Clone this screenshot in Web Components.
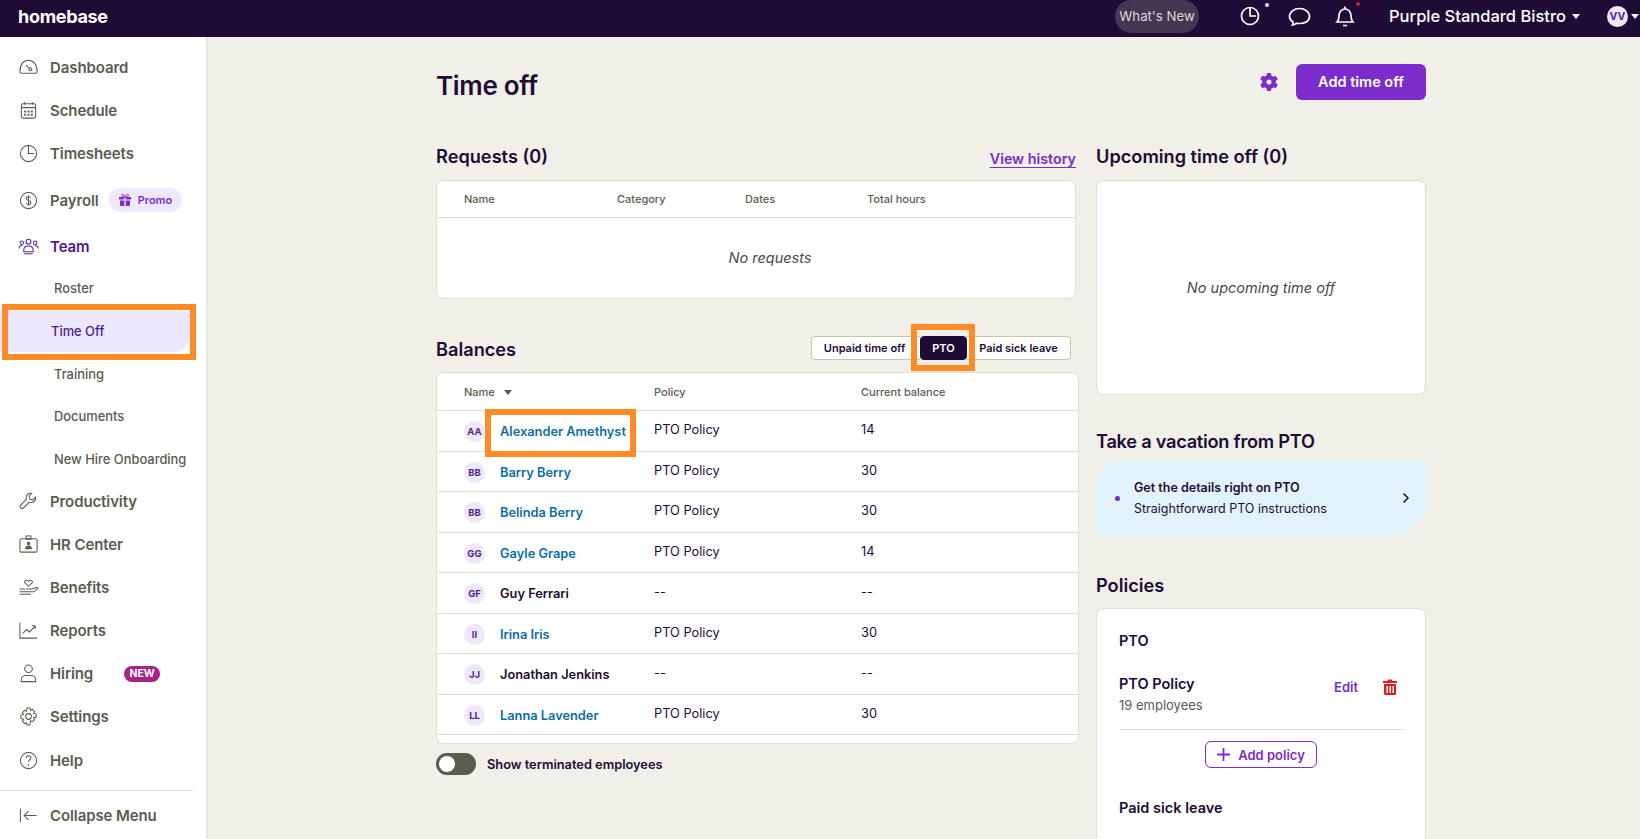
<!DOCTYPE html>
<html lang="en"><head><meta charset="utf-8"><title>Time off</title>
<style>
html,body{margin:0;padding:0;height:839px;overflow:hidden;background:#f0efe8}
body{font-family:Inter,"Noto Sans",sans-serif;color:#1e0c36}
</style></head><body>
<hb-app></hb-app>
<script>
const ic={
dash:'<path d="M1.500 15.500c0-8 4-12 9-12s9 4 9 12c0 1-.5 1.500-1.500 1.500H3c-1 0-1.500-.5-1.500-1.500z"/><circle cx="12.500" cy="13" r="1.500"/><path d="M11.500 12 8 8.500"/>',
cal:'<rect x="3" y="4" width="15" height="15" rx="2"/><path d="M3 8h15M6.500 2v3M14.500 2v3"/><path stroke-width="2" stroke-dasharray="2 1.500" d="M6 12h10M6 15.500h10"/>',
clock:'<circle cx="10.500" cy="11" r="8.500"/><path d="M10.500 2.500V11h6"/>',
dollar:'<circle cx="10.500" cy="11" r="8.500"/><path d="M13 8.500c-.5-1-1.500-1.500-2.500-1.500-1.500 0-2.500.8-2.500 2s1 1.700 2.500 2 2.500.8 2.500 2-1 2-2.500 2-2-.5-2.500-1.500M10.500 5.500v11"/>',
team:'<circle cx="10.500" cy="6" r="2.500"/><circle cx="3.500" cy="7" r="1.800"/><circle cx="17.500" cy="7" r="1.800"/><path d="M.5 13c0-2 1.500-3 3.500-3M20.500 13c0-2-1.500-3-3.500-3M5.500 15c0-3 2-4.500 5-4.500s5 1.500 5 4.500v1.500h-10zM6 18.500h9"/>',
wrench:'<path d="M18 6.500l-3 3-3-1-1-3 3-3c-3-.8-6 1-6 4.500 0 .8.200 1.300.3 1.800l-6 6c-1 1-1 2 0 3s2 1 3 0l6-6c.5.1 1 .3 1.800.3 3.500 0 5.300-3 4.900-5.600z"/>',
badge:'<rect x="1.500" y="5" width="18" height="14" rx="1.500"/><rect x="8" y="2" width="5" height="3.500"/><circle cx="10.500" cy="10" r="1.300" fill="currentColor"/><path fill="currentColor" d="M7.500 15.500c0-2 1.200-3 3-3s3 1 3 3z"/>',
hand:'<path d="M10.500 9.500 7 6.500c-1.500-1.500 0-3.500 1.700-3 .9.200 1.800 1.200 1.800 1.200s.9-1 1.800-1.200c1.700-.5 3.200 1.500 1.700 3z"/><path d="M1 12.500h6M8 12.500h6l5-1.500c1-.3 1.800.800 1 1.500l-4 3H1M1 18h12"/>',
chart:'<path d="M1.500 3v16h18"/><path d="M4.500 14l4-4 3 2.500 6-6M14 6h3.500v3.500"/>',
person:'<circle cx="10.500" cy="6" r="4"/><path d="M3 19.500c-.5-4 1.500-6.500 4-6.500h7c2.500 0 4.500 2.500 4 6.500z"/>',
gear:'<path d="M9 2h3l.6 2.500 2-.9 2.200 2.200-1 2 2.700.7v3l-2.700.7 1 2-2.200 2.200-2-.9L12 20H9l-.6-2.500-2 .9-2.200-2.200 1-2L2.500 12.500v-3l2.700-.7-1-2 2.200-2.200 2 .9z"/><circle cx="10.500" cy="11" r="3"/>',
help:'<circle cx="10.500" cy="11" r="8.500"/><path d="M8 8.500c0-1.500 1.100-2.500 2.500-2.500s2.500 1 2.500 2.300c0 2-2.500 2-2.500 4.200"/><path d="M10.500 15v1" stroke-linecap="round"/>',
collapse:'<path d="M2 4v14M19 11H6M10.500 6.500 6 11l4.500 4.500"/>'
};
function def(name,html,init){customElements.define(name,class extends HTMLElement{constructor(){super();const t=document.createElement('template');t.innerHTML=typeof html==='function'?html(this):html;this.attachShadow({mode:'open'}).appendChild(t.content.cloneNode(true));}connectedCallback(){if(init)init(this)}});}
const a=(e,n,d='')=>e.getAttribute(n)??d;

def('hb-nav',e=>`<style>
:host{display:flex;align-items:center;height:${a(e,'h','43')}px;font-size:15px;font-weight:600;color:#5b5b4f;white-space:nowrap;box-sizing:border-box;padding-left:18px;letter-spacing:-.1px}
:host([sub]){padding-left:54px;font-size:12.900px;font-weight:500;letter-spacing:0}
:host([active]){color:#4c1d8f}
svg{width:21px;height:21px;margin-right:11px;flex:none;fill:none;stroke:currentColor;stroke-width:1.100}
:host([active]) svg{color:#5a22a8}
</style>${a(e,'i')?`<svg viewBox="0 0 21 22">${ic[a(e,'i')]}</svg>`:''}<span><slot></slot></span><slot name="x"></slot>`);

def('hb-pill',`<style>
:host{display:inline-flex;align-items:center;height:24px;padding:0 10px;margin-left:10px;border-radius:12px;background:#efe8fc;color:#7b2cca;font-size:11px;font-weight:600;gap:7px;letter-spacing:0}
svg{width:12px;height:12px;fill:currentColor}
</style><svg viewBox="0 0 12 12"><path d="M0 3h5.300v2.500H0zM6.700 3H12v2.500H6.700zM1 6.500h4.300V12H2a1 1 0 0 1-1-1zM6.700 6.500H11V11a1 1 0 0 1-1 1H6.700z"/><path d="M6 3C4 3 2.500 2.500 2.500 1.200 2.500 0 5 0 6 3c1-3 3.500-3 3.500-1.800C9.500 2.500 8 3 6 3z" fill="none" stroke="currentColor"/></svg><slot></slot>`);

def('hb-new',`<style>:host{display:inline-flex;align-items:center;justify-content:center;width:36px;height:16px;margin-left:31px;border-radius:8px;background:#a3228c;color:#fff;font-size:10.500px;font-weight:700;letter-spacing:0}</style><slot></slot>`);

def('hb-sidebar',`<style>
:host{display:block;width:208px;flex:none;background:#fff;border-right:2px solid #e8e6dc;box-sizing:border-box;height:802px;padding-top:9px;overflow:hidden}
.cur{position:relative;height:43px;display:flex;align-items:center}
hr{margin:8px 13px 0 0;border:0;border-top:1px solid #dcdcd6}
.active{height:41px;margin:1px 0;background:#ede7fb;border-radius:0 0 16px 0;display:flex;align-items:center}
.hl{position:absolute;left:2px;width:194px;height:56px;border:6px solid #ff8b26;box-sizing:border-box}
</style>
<hb-nav i="dash" h="43">Dashboard</hb-nav>
<hb-nav i="cal">Schedule</hb-nav>
<hb-nav i="clock">Timesheets</hb-nav>
<hb-nav i="dollar" h="50">Payroll<hb-pill slot="x">Promo</hb-pill></hb-nav>
<hb-nav i="team" active h="42">Team</hb-nav>
<hb-nav sub h="43">Roster</hb-nav>
<div class="cur"><div class="active" style="width:190px"><hb-nav sub active style="padding-left:51px">Time Off</hb-nav></div><div class="hl" style="top:-6px"></div></div>
<hb-nav sub h="42">Training</hb-nav>
<hb-nav sub>Documents</hb-nav>
<hb-nav sub h="42">New Hire Onboarding</hb-nav>
<hb-nav i="wrench">Productivity</hb-nav>
<hb-nav i="badge">HR Center</hb-nav>
<hb-nav i="hand">Benefits</hb-nav>
<hb-nav i="chart">Reports</hb-nav>
<hb-nav i="person">Hiring<hb-new slot="x">NEW</hb-new></hb-nav>
<hb-nav i="gear">Settings</hb-nav>
<hb-nav i="help" h="44">Help</hb-nav>
<hr>
<hb-nav i="collapse" h="48">Collapse Menu</hb-nav>`);

def('hb-topbar',`<style>
:host{display:flex;align-items:center;height:37px;background:#1e0c36;color:#fff;position:relative;padding:0 1px 5px 18px;box-sizing:border-box}
.logo{font-size:18px;font-weight:700;letter-spacing:-.3px}
.sp{flex:1}
.wn{display:flex;align-items:center;height:33px;width:84px;justify-content:center;border-radius:16.500px;background:#463651;color:#ddd8de;font-size:13.200px;margin-right:41px;flex:none}
svg{fill:none;stroke:#fff;stroke-width:1.700;flex:none}
.ib{position:relative;display:flex}
.d{position:absolute;width:4px;height:4px;border-radius:50%;background:#e8e6e0;top:-3px;right:-9px}
.d.r{background:#e0201b;right:-5px;top:-3px}
.loc{font-size:16.500px;font-weight:500;margin-left:34px}
.car{width:0;height:0;border:4.500px solid transparent;border-top:5px solid #fff;border-bottom:0;margin-left:6px}
.av{width:21px;height:21px;border-radius:50%;background:#efe8fc;color:#5a22a8;font-size:10.500px;font-weight:700;display:flex;align-items:center;justify-content:center;margin-left:27px}
</style>
<span class="logo">homebase</span><span class="sp"></span>
<span class="wn">What's New</span>
<span class="ib"><svg width="20" height="20" viewBox="0 0 20 20"><circle cx="10" cy="10" r="8.500"/><path d="M10 2v8h6"/></svg><i class="d"></i></span>
<span class="ib" style="margin-left:28px"><svg width="23" height="21" viewBox="0 0 23 21"><path d="M5 16C2.500 14.500 1.500 12.500 1.500 10.500c0-4.500 4.500-8 10-8s10 3.500 10 8-4.500 7-10 7c-1 0-2 0-3-.3-1 1-2.500 1.800-4 1.800.5-.5.700-1.500.5-3z"/></svg></span>
<span class="ib" style="margin-left:24px"><svg width="20" height="23" viewBox="0 0 20 23"><path d="M2 17c1.500-1.500 2-3 2-6 0-4 2.500-7 6-7s6 3 6 7c0 3 .5 4.500 2 6zM10 1.500V4M8 20.500h4" /></svg><i class="d r"></i></span>
<span class="loc">Purple Standard Bistro</span><span class="car"></span>
<span class="av">VV</span><span class="car" style="margin:0 0 0 3px"></span>`);

def('hb-card',`<style>:host{display:block;background:#fff;border:1px solid #e2e0cf;border-radius:8px;box-sizing:border-box;overflow:hidden}</style><slot></slot>`);

def('hb-h',`<style>:host{display:block;font-size:18.200px;font-weight:600;color:#1e0c36;line-height:24px}</style><slot></slot>`);

def('hb-req',`<style>
:host{display:block;height:100%}
.head{display:grid;grid-template-columns:153px 128px 122px 1fr;height:36px;align-items:center;padding-left:27px;border-bottom:1px solid #e2e0cf;font-size:11px;font-weight:500;color:#5b5b4f}
.empty{display:flex;align-items:center;justify-content:center;height:80px;padding-left:28px;font-style:italic;font-size:14.500px;color:#4a4a42}
</style><div class="head"><span>Name</span><span>Category</span><span>Dates</span><span>Total hours</span></div><div class="empty"><slot></slot></div>`);

def('hb-row',e=>{const n=a(e,'name'),p=a(e,'policy','--'),b=a(e,'bal','--');
const init=n.split(' ').map(w=>w[0]).join('').toUpperCase();
return `<style>
:host{display:grid;grid-template-columns:190px 207px 1fr;height:40.500px;align-items:center;padding-left:27px;border-bottom:1px solid #e2e0cf;box-sizing:border-box;font-size:12.800px;color:#1e0c36;position:relative}
.n{display:flex;align-items:center;gap:15px;font-weight:600;padding-top:2px}
.av{width:21px;height:21px;border-radius:50%;background:#efe8fc;color:#4c2a8c;font-size:9.500px;font-weight:700;display:flex;align-items:center;justify-content:center;flex:none}
.l{color:#0b6ea5}
.v{padding-bottom:2px}
</style><div class="n"><span class="av">${init}</span><span class="${e.hasAttribute('link')?'l':''}">${n}</span></div><div class="v">${p}</div><div class="v">${b}</div><slot></slot>`});

def('hb-balances',`<style>
:host{display:block;height:100%}
.head{display:grid;grid-template-columns:190px 207px 1fr;height:38px;align-items:center;padding-left:27px;border-bottom:1px solid #e2e0cf;box-sizing:border-box;font-size:11px;font-weight:500;color:#5b5b4f}
.c{display:inline-block;border:4px solid transparent;border-top:5px solid #5b5b4f;border-bottom:0;margin-left:9px;vertical-align:1px}
</style><div class="head"><span>Name<i class="c"></i></span><span>Policy</span><span>Current balance</span></div><slot></slot>`);

def('hb-tabs',`<style>
:host{display:flex;align-items:center;height:24px;font-size:11px;font-weight:600;color:#1e0c36;position:relative;margin-right:5px}
span{display:flex;align-items:center;justify-content:center;height:24px;box-sizing:border-box;background:#fff;border:1px solid #c9c7a8}
.a{width:109px;border-radius:4px 0 0 4px;border-right:0;padding-right:3px}
.b{width:47px;background:#1e0c36;color:#fff;border-radius:4px;border-color:#1e0c36}
.c{width:104px;border-radius:0 4px 4px 0;border-left:0}
i{position:absolute;left:100px;top:-12px;width:64px;height:47px;border:6px solid #ff8b26;box-sizing:border-box}
</style><span class="a">Unpaid time off</span><span class="b">PTO</span><span class="c">Paid sick leave</span><i></i>`);

def('hb-main',`<style>
:host{display:block;flex:1;min-width:0;height:802px;overflow:hidden;padding-left:228px;box-sizing:border-box}
.top{display:flex;align-items:center;height:67px;padding-top:11px;width:990px}
h1{flex:1;margin:0;padding-top:7px;font-size:26px;font-weight:600;letter-spacing:-.3px;color:#1e0c36}
.btn{display:flex;align-items:center;justify-content:center;width:130px;height:36px;margin-left:18px;background:#7b2cca;color:#fff;border-radius:6px;font-size:14.500px;font-weight:600}
.gear{width:18px;height:18px;fill:#7b2cca}
.cols{display:grid;grid-template-columns:640px 330px;gap:0 20px;width:990px}
.l,.r{display:flex;flex-direction:column}
.hd{display:flex;align-items:flex-end;justify-content:space-between;height:34px;padding-bottom:10px;box-sizing:border-box;margin-top:28.500px}
.hist{font-size:14.300px;font-weight:600;color:#7b2cca;text-decoration:underline;text-underline-offset:3px;margin-bottom:1px}
.req{height:119px;margin-top:2px}
.bal{height:372px;width:643px;margin-top:6px}
.balhd{margin-top:30.500px;height:37px;display:flex;align-items:center;justify-content:space-between}
.balhd hb-h{padding-top:2px}
.tog{display:flex;align-items:center;gap:11px;margin-top:9px;font-size:12.800px;font-weight:600}
.sw{width:40px;height:22px;border-radius:11px;background:#5b5b4f;position:relative;flex:none}
.sw::after{content:"";position:absolute;left:3px;top:3px;width:16px;height:16px;border-radius:50%;background:#fff}
.up{height:215px;margin-top:2px;display:flex;align-items:center;justify-content:center;font-style:italic;font-size:14.500px;color:#4a4a42}
.upin{display:flex;height:213px;align-items:center;justify-content:center}
.tip{height:76px;margin-top:7px;background:#e2f3fc;border-radius:26px 0 36px 0;display:flex;align-items:center;padding:0 16px 0 19px;font-size:12.500px}
.dot{width:5px;height:5px;border-radius:50%;background:#7b2cca;flex:none;margin-right:14px}
.tx{flex:1;line-height:21px}
.tx b{display:block;font-weight:600}
.pol{margin-top:11px;height:260px}
.pin{padding:22px 22px 0}
.ph{font-size:14.500px;font-weight:600;line-height:20px}
.item{display:flex;margin-top:23px;padding-bottom:13px;border-bottom:1px solid #e2e0cf}
.item>div:first-child{flex:1}
.nm{font-size:14.500px;font-weight:600;line-height:20px}
.emp{font-size:13px;color:#5b5b4f;line-height:22px}
.ed{font-size:13px;font-weight:600;color:#7b2cca;margin:5px 25px 0 0}
.tr{width:14px;height:16px;margin:5px 6px 0 0;fill:#dd1f1b}
.addw{display:flex;justify-content:center;margin-top:11px}
.add{display:flex;align-items:center;gap:8px;height:27px;width:112px;justify-content:center;box-sizing:border-box;border:1px solid #7b2cca;border-radius:6px;color:#7b2cca;font-size:13px;font-weight:600}
.add svg{width:13px;height:13px;stroke:currentColor;stroke-width:1.800;fill:none}
</style>
<div class="top"><h1>Time off</h1>
<svg class="gear" viewBox="0 0 18 18"><circle cx="9" cy="9" r="4.700" fill="none" stroke="#7b2cca" stroke-width="4.400"/><g><rect x="6.800" y="0" width="4.400" height="18" rx="1"/><rect x="6.800" y="0" width="4.400" height="18" rx="1" transform="rotate(60 9 9)"/><rect x="6.800" y="0" width="4.400" height="18" rx="1" transform="rotate(120 9 9)"/></g><circle cx="9" cy="9" r="2.500" fill="#f0efe8"/></svg>
<span class="btn">Add time off</span></div>
<div class="cols"><div class="l">
<div class="hd"><hb-h>Requests (0)</hb-h><span class="hist">View history</span></div>
<hb-card class="req"><hb-req>No requests</hb-req></hb-card>
<div class="balhd"><hb-h>Balances</hb-h><hb-tabs></hb-tabs></div>
<hb-card class="bal"><hb-balances>
<hb-row name="Alexander Amethyst" policy="PTO Policy" bal="14" link><i style="position:absolute;left:48px;top:-2px;width:151px;height:48px;border:6px solid #ff8b26;box-sizing:border-box"></i></hb-row>
<hb-row name="Barry Berry" policy="PTO Policy" bal="30" link></hb-row>
<hb-row name="Belinda Berry" policy="PTO Policy" bal="30" link></hb-row>
<hb-row name="Gayle Grape" policy="PTO Policy" bal="14" link></hb-row>
<hb-row name="Guy Ferrari"></hb-row>
<hb-row name="Irina Iris" policy="PTO Policy" bal="30" link></hb-row>
<hb-row name="Jonathan Jenkins"></hb-row>
<hb-row name="Lanna Lavender" policy="PTO Policy" bal="30" link></hb-row>
</hb-balances></hb-card>
<div class="tog"><span class="sw"></span>Show terminated employees</div>
</div><div class="r">
<div class="hd"><hb-h style="position:relative;top:0">Upcoming time off (0)</hb-h></div>
<hb-card class="up"><div class="upin">No upcoming time off</div></hb-card>
<hb-h style="margin-top:34.500px;letter-spacing:-.25px">Take a vacation from PTO</hb-h>
<div class="tip"><span class="dot"></span><div class="tx"><b>Get the details right on PTO</b>Straightforward PTO instructions</div>
<svg width="8" height="12" viewBox="0 0 8 12" fill="none" stroke="#1e0c36" stroke-width="1.500"><path d="M1.500 1.500 6 6l-4.500 4.500"/></svg></div>
<hb-h style="margin-top:37px">Policies</hb-h>
<hb-card class="pol"><div class="pin">
<div class="ph">PTO</div>
<div class="item"><div><div class="nm">PTO Policy</div><div class="emp">19 employees</div></div><span class="ed">Edit</span>
<svg class="tr" viewBox="0 0 14 16"><path fill-rule="evenodd" d="M0 2h4.500L5 .5h4l.5 1.500H14v2H0zM1 5h12v9.500a1.500 1.500 0 0 1-1.500 1.500h-9A1.500 1.500 0 0 1 1 14.500zm2.500 2v7H5V7zm3 0v7H8V7zm3 0v7H11V7z"/></svg></div>
<div class="addw"><span class="add"><svg viewBox="0 0 13 13"><path d="M6.500 0v13M0 6.500h13"/></svg>Add policy</span></div>
<div class="ph" style="margin-top:30px">Paid sick leave</div>
</div></hb-card>
</div></div>`);

def('hb-app',`<style>
:host{display:block;width:1640px;height:839px;overflow:hidden}
.b{display:flex;height:802px}
</style><hb-topbar></hb-topbar><div class="b"><hb-sidebar></hb-sidebar><hb-main></hb-main></div>`);
</script></body></html>
